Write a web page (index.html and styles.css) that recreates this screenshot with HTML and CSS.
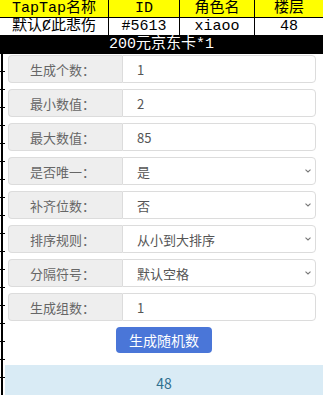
FILE: index.html
```html
<!DOCTYPE html>
<html lang="zh">
<head>
    <meta charset="UTF-8">
    <title>随机数生成</title>
    <link rel="stylesheet" href="styles.css">
</head>
<body>
<div class="sheet">
    <div class="cell head">TapTap名称</div>
    <div class="cell head">ID</div>
    <div class="cell head">角色名</div>
    <div class="cell head last">楼层</div>
    <div class="cell">默认Ȼ此悲伤</div>
    <div class="cell">#5613</div>
    <div class="cell">xiaoo</div>
    <div class="cell last">48</div>
    <div class="prize">200元京东卡*1</div>
</div>

<div class="page">
    <div class="gutter"></div>
    <div class="main">
        <div class="form">
            <div class="field">
                <span class="label">生成个数：</span>
                <input class="control" type="text" value="1">
            </div>
            <div class="field">
                <span class="label">最小数值：</span>
                <input class="control" type="text" value="2">
            </div>
            <div class="field">
                <span class="label">最大数值：</span>
                <input class="control" type="text" value="85">
            </div>
            <div class="field">
                <span class="label">是否唯一：</span>
                <select class="control">
                    <option>是</option>
                    <option>否</option>
                </select>
            </div>
            <div class="field">
                <span class="label">补齐位数：</span>
                <select class="control">
                    <option>否</option>
                    <option>是</option>
                </select>
            </div>
            <div class="field">
                <span class="label">排序规则：</span>
                <select class="control">
                    <option>从小到大排序</option>
                    <option>从大到小排序</option>
                    <option>不排序</option>
                </select>
            </div>
            <div class="field">
                <span class="label">分隔符号：</span>
                <select class="control">
                    <option>默认空格</option>
                    <option>逗号</option>
                </select>
            </div>
            <div class="field">
                <span class="label">生成组数：</span>
                <input class="control" type="text" value="1">
            </div>
            <button class="go">生成随机数</button>
        </div>
        <div class="result">48</div>
    </div>
</div>
</body>
</html>
```

FILE: styles.css
```css
body {
    margin: 0;
    background: white;
    font-family: "Noto Sans CJK SC", sans-serif;
}

.sheet {
    display: grid;
    grid-template-columns: 109px 71px 75px 1fr;
    font-family: "Liberation Mono", "Noto Sans CJK SC", monospace;
    font-size: 15px;
    color: #000;
}
.cell {
    height: 18px;
    line-height: 18px;
    box-sizing: border-box;
    border-right: 1px solid #000;
    border-bottom: 1px solid #000;
    text-align: center;
    white-space: nowrap;
    overflow: hidden;
}
.cell.last {
    border-right: none;
}
.head {
    background: #ffff00;
}
.prize {
    grid-column: 1 / -1;
    height: 18px;
    line-height: 18px;
    background: #000;
    color: #fff;
    text-align: center;
}

.page {
    display: flex;
}
.gutter {
    width: 5px;
    flex-shrink: 0;
    background:
        linear-gradient(to right, transparent 1px, #000 1px, #000 3px, transparent 3px),
        repeating-linear-gradient(to bottom, transparent 0, transparent 17px, #000 17px, #000 18px);
}
.main {
    flex: 1;
}

.form {
    padding: 1px 7px 0 3px;
    display: flex;
    flex-direction: column;
    gap: 6px;
}
.field {
    display: flex;
    height: 28px;
}
.label {
    width: 114px;
    box-sizing: border-box;
    background: #eeeeee;
    border: 1px solid #dcdcdc;
    border-right: none;
    border-radius: 4px 0 0 4px;
    color: #666;
    font-size: 13px;
    display: flex;
    align-items: center;
    justify-content: center;
    padding-right: 6px;
}
.control {
    flex: 1;
    min-width: 0;
    box-sizing: border-box;
    height: 28px;
    margin: 0;
    border: 1px solid #dcdcdc;
    border-radius: 0 4px 4px 0;
    background: #fff;
    color: #555;
    font-family: "Noto Sans CJK SC", sans-serif;
    font-size: 13px;
    padding: 0 0 0 14px;
    outline: none;
}
select.control {
    appearance: none;
    -webkit-appearance: none;
    background-image: url("data:image/svg+xml;utf8,<svg xmlns='http://www.w3.org/2000/svg' width='6' height='4' viewBox='0 0 6 4'><path d='M0.5 0.7 L3 3 L5.5 0.7' fill='none' stroke='%23777' stroke-width='1.1'/></svg>");
    background-repeat: no-repeat;
    background-position: right 4px center;
}

.go {
    align-self: center;
    width: 96px;
    height: 26px;
    margin: 0 0 0 4px;
    border: none;
    border-radius: 4px;
    background: #4a76d8;
    color: #fff;
    font-family: "Noto Sans CJK SC", sans-serif;
    font-size: 14px;
    cursor: pointer;
}

.result {
    margin-top: 12px;
    background: #d9ebf5;
    color: #31708f;
    text-align: center;
    font-size: 14px;
    line-height: 20px;
    padding: 8px 0 15px;
}
```
